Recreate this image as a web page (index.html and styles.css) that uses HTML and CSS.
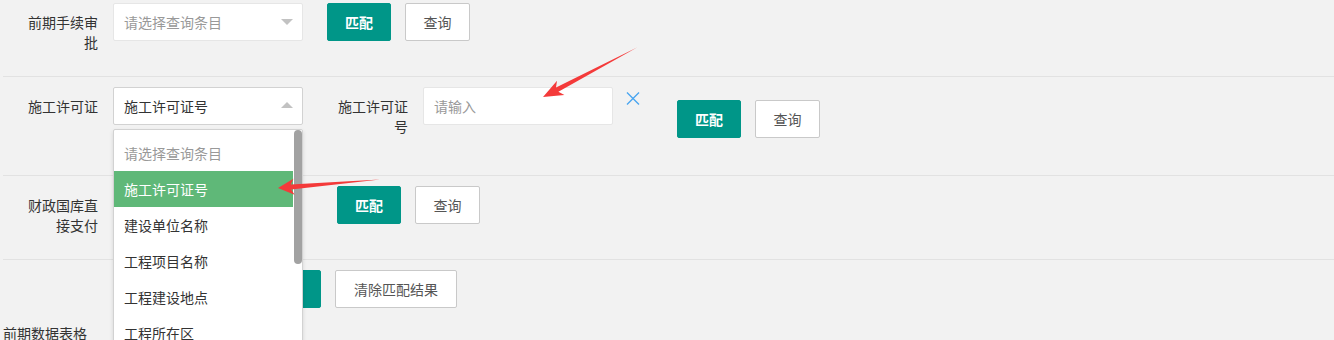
FILE: index.html
```html
<!DOCTYPE html>
<html lang="zh-CN">
<head>
<meta charset="utf-8">
<title>查询匹配</title>
<link rel="stylesheet" href="styles.css">
</head>
<body>
<div class="page">
  <div class="row row-1">
    <label class="form-label">前期手续审批</label>
    <div class="select"><span class="select-text placeholder">请选择查询条目</span><i class="edge"></i></div>
    <button class="btn btn-primary gap-wide">匹配</button>
    <button class="btn btn-default">查询</button>
  </div>

  <div class="row row-2">
    <label class="form-label">施工许可证</label>
    <div class="select open">
      <span class="select-text">施工许可证号</span><i class="edge up"></i>
      <div class="dropdown">
        <dl class="options">
          <dd class="option placeholder">请选择查询条目</dd>
          <dd class="option selected">施工许可证号</dd>
          <dd class="option">建设单位名称</dd>
          <dd class="option">工程项目名称</dd>
          <dd class="option">工程建设地点</dd>
          <dd class="option">工程所在区</dd>
          <dd class="option">工程规模</dd>
        </dl>
        <div class="scroll-thumb"></div>
      </div>
    </div>
    <label class="form-label label-second">施工许可证号</label>
    <input class="input" type="text" placeholder="请输入">
    <svg class="close-icon" width="14" height="13" viewBox="0 0 14 13"><path d="M1 0.5 L13 12.5 M13 0.5 L1 12.5" stroke="#4aa6f0" stroke-width="1.4" fill="none"/></svg>
    <div class="btn-group shifted">
      <button class="btn btn-primary">匹配</button>
      <button class="btn btn-default">查询</button>
    </div>
  </div>

  <div class="row row-3">
    <label class="form-label">财政国库直接支付</label>
    <div class="select"><span class="select-text placeholder">请选择查询条目</span><i class="edge"></i></div>
    <button class="btn btn-primary gap-wider">匹配</button>
    <button class="btn btn-default">查询</button>
  </div>

  <div class="row row-4">
    <button class="btn btn-primary btn-all">全部匹配</button>
    <button class="btn btn-default btn-clear">清除匹配结果</button>
  </div>

  <div class="section-title">前期数据表格</div>
</div>

<svg class="arrows" width="1334" height="340" viewBox="0 0 1334 340">
  <polygon points="637,47.6 558.4,91.8 564.4,94.9 543,97 557,80.7 556,87.4" fill="#f43a3a"/>
  <polygon points="380,179.6 291.2,189.5 294.6,194.8 278,188 293.4,178.8 290.8,184.5" fill="#f43a3a"/>
</svg>
</body>
</html>
```

FILE: styles.css
```css
* { box-sizing: border-box; }

html, body {
  margin: 0;
  padding: 0;
  background: #f2f2f2;
  overflow: hidden;
}

body {
  width: 1334px;
  height: 340px;
  position: relative;
  font-family: "Noto Sans CJK SC", "Noto Sans", sans-serif;
  font-size: 14px;
  color: #333;
}

.page {
  padding-left: 3px;
}

.row {
  display: flex;
  align-items: flex-start;
  border-bottom: 1px solid #e2e2e2;
}

.row-1 { height: 77px; padding-top: 3px; }
.row-2 { height: 99px; padding-top: 10px; position: relative; z-index: 5; }
.row-3 { height: 84px; padding-top: 10px; }
.row-4 { border-bottom: none; padding-top: 10px; padding-bottom: 15px; padding-left: 224px; }

.form-label {
  flex-shrink: 0;
  width: 110px;
  padding: 9px 15px;
  line-height: 20px;
  text-align: right;
  color: #333;
}

.label-second { margin-left: 10px; }

.select {
  position: relative;
  width: 190px;
  height: 38px;
  background: #fff;
  border: 1px solid #e6e6e6;
  border-radius: 2px;
  flex-shrink: 0;
}

.select.open { border-color: #d2d2d2; }

.select-text {
  display: block;
  padding-left: 10px;
  line-height: 36px;
  color: #333;
}

.select-text.placeholder { color: #999; }

.edge {
  position: absolute;
  right: 9px;
  top: 50%;
  margin-top: -3px;
  width: 0;
  height: 0;
  border-left: 6px solid transparent;
  border-right: 6px solid transparent;
  border-top: 6px solid #c2c2c2;
}

.edge.up {
  margin-top: -4px;
  border-top: none;
  border-bottom: 6px solid #c2c2c2;
}

.dropdown {
  position: absolute;
  left: -1px;
  top: 41px;
  width: 190px;
  height: 300px;
  background: #fff;
  border: 1px solid #d2d2d2;
  border-radius: 2px;
  box-shadow: 0 2px 4px rgba(0, 0, 0, 0.12);
  overflow: hidden;
  z-index: 10;
}

.options {
  margin: 0;
  padding: 5px 9px 5px 0;
}

.option {
  margin: 0;
  padding: 0 10px;
  line-height: 36px;
  height: 36px;
  color: #333;
  white-space: nowrap;
}

.option.placeholder { color: #999; }

.option.selected {
  background: #5fb878;
  color: #fff;
}

.scroll-thumb {
  position: absolute;
  right: 0;
  top: 0;
  width: 8px;
  height: 134px;
  border-radius: 4px;
  background: #a2a2a2;
}

.input {
  flex-shrink: 0;
  width: 190px;
  height: 38px;
  padding: 0 10px;
  border: 1px solid #e6e6e6;
  border-radius: 2px;
  background: #fff;
  font-family: inherit;
  font-size: 14px;
  color: #333;
  outline: none;
}

.input::placeholder { color: #999; }

.close-icon {
  flex-shrink: 0;
  margin-left: 13px;
  margin-top: 5px;
}

.btn-group {
  display: flex;
}

.btn-group.shifted {
  margin-left: 37px;
  margin-top: 13px;
}

.btn {
  flex-shrink: 0;
  height: 38px;
  line-height: 36px;
  padding: 0 17px;
  border-radius: 2px;
  font-family: inherit;
  font-size: 14px;
  cursor: pointer;
  white-space: nowrap;
}

.btn-primary {
  width: 64px;
  background: #009688;
  border: 1px solid #009688;
  color: #fff;
  font-weight: 600;
}

.btn-default {
  width: 65px;
  margin-left: 14px;
  background: #fff;
  border: 1px solid #c9c9c9;
  color: #555;
}

.gap-wide { margin-left: 24px; }
.gap-wider { margin-left: 34px; }

.btn-all { width: 94px; }
.btn-clear { width: 122px; }

.section-title {
  line-height: 20px;
  color: #333;
}

.arrows {
  position: absolute;
  left: 0;
  top: 0;
  pointer-events: none;
  z-index: 20;
}
```
